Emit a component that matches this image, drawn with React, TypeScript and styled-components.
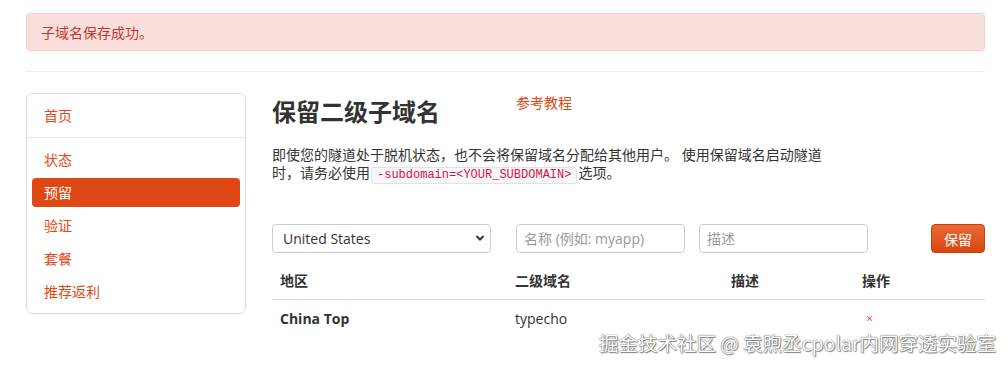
import styled, { createGlobalStyle } from "styled-components";

const GlobalStyle = createGlobalStyle`
  html, body {
    margin: 0;
    padding: 0;
    background: #ffffff;
  }
  body {
    font-family: "Open Sans", "Noto Sans CJK SC", sans-serif;
    font-size: 14px;
    color: #333333;
  }
  * { box-sizing: border-box; }
`;

const Page = styled.div`
  position: relative;
  width: 1008px;
  height: 367px;
  overflow: hidden;
  padding: 13px 23px 0 26px;
`;

const Alert = styled.div`
  height: 38px;
  display: flex;
  align-items: center;
  padding: 0 14px;
  background: #f9dedc;
  border: 1px solid #f3cfcc;
  border-radius: 4px;
  color: #c0392b;
  font-size: 14px;
`;

const Divider = styled.hr`
  margin: 20px 0 21px;
  border: 0;
  border-top: 1px solid #eeeeee;
`;

const Layout = styled.div`
  display: grid;
  grid-template-columns: 220px 1fr;
  column-gap: 26px;
  align-items: start;
`;

const Sidebar = styled.nav`
  border: 1px solid #dddddd;
  border-radius: 6px;
  padding: 7px 5px;
  display: flex;
  flex-direction: column;
  gap: 4px;
`;

const NavItem = styled.a<{ $active?: boolean }>`
  display: block;
  height: 29px;
  line-height: 29px;
  padding: 0 12px;
  border-radius: 4px;
  text-decoration: none;
  font-size: 14px;
  color: ${(p) => (p.$active ? "#ffffff" : "#dd4814")};
  background: ${(p) => (p.$active ? "#dd4814" : "transparent")};
`;

const NavDivider = styled.div`
  height: 1px;
  background: #e5e5e5;
  margin: 3px -5px 3px;
`;

const Main = styled.main`
  display: flex;
  flex-direction: column;
`;

const TitleRow = styled.div`
  display: grid;
  grid-template-columns: 244px 1fr;
  align-items: start;
`;

const Title = styled.h2`
  margin: 0;
  font-size: 24px;
  line-height: 38px;
  font-weight: 700;
  color: #333333;
`;

const Link = styled.a`
  font-size: 14px;
  line-height: 20px;
  color: #dd4814;
  text-decoration: none;
`;

const Intro = styled.p`
  margin: 15px 0 0;
  max-width: 560px;
  line-height: 18px;
  font-size: 14px;
  color: #333333;
`;

const Code = styled.code`
  font-family: "Liberation Mono", monospace;
  font-size: 12px;
  color: #dd1144;
  background: #f7f7f9;
  border: 1px solid #e1e1e8;
  border-radius: 3px;
  padding: 0 5px 1px;
  margin: 0 1px;
`;

const FormRow = styled.form`
  display: flex;
  align-items: center;
  margin-top: 40px;
`;

const SelectWrap = styled.div`
  position: relative;
  width: 219px;
  height: 29px;
  margin-right: 25px;
`;

const Select = styled.select`
  appearance: none;
  width: 100%;
  height: 100%;
  border: 1px solid #cccccc;
  border-radius: 4px;
  background: #ffffff;
  padding: 0 10px;
  font-family: "Open Sans", "Noto Sans CJK SC", sans-serif;
  font-size: 14px;
  color: #333333;
`;

const Chevron = styled.svg`
  position: absolute;
  right: 6px;
  top: 10px;
  pointer-events: none;
`;

const Input = styled.input<{ $gap?: number }>`
  width: 169px;
  height: 29px;
  margin-right: ${(p) => p.$gap ?? 0}px;
  border: 1px solid #cccccc;
  border-radius: 4px;
  padding: 0 7px;
  font-family: "Open Sans", "Noto Sans CJK SC", sans-serif;
  font-size: 14px;
  color: #333333;
  &::placeholder {
    color: #9a9a9a;
  }
`;

const SaveButton = styled.button`
  margin-left: auto;
  width: 54px;
  height: 29px;
  border: 1px solid #c8400f;
  border-radius: 4px;
  background: linear-gradient(#ea6a37, #d9460f);
  color: #ffffff;
  font-family: "Open Sans", "Noto Sans CJK SC", sans-serif;
  font-size: 14px;
  padding: 0;
`;

const Table = styled.table`
  margin-top: 10px;
  width: 100%;
  border-collapse: collapse;
  table-layout: fixed;
`;

const Th = styled.th<{ $w: number }>`
  width: ${(p) => p.$w}px;
  text-align: left;
  font-weight: 700;
  font-size: 14px;
  line-height: 20px;
  padding: 8px 8px;
  border-bottom: 1px solid #dddddd;
`;

const Td = styled.td<{ $bold?: boolean }>`
  font-size: 14px;
  line-height: 20px;
  padding: 8px 8px;
  font-weight: ${(p) => (p.$bold ? 700 : 400)};
`;

const Remove = styled.a`
  color: #dd4814;
  text-decoration: none;
  font-size: 12px;
  padding-left: 4px;
`;

const Watermark = styled.div`
  position: absolute;
  right: 12px;
  bottom: 12px;
  font-family: "Noto Sans CJK SC", sans-serif;
  font-size: 19.5px;
  line-height: 24px;
  color: #ffffff;
  text-shadow: 0 0 1px #666, 0 0 1px #666, 1px 1px 1px #888;
  white-space: nowrap;
`;

const navItems = ["状态", "预留", "验证", "套餐", "推荐返利"];

export default function App() {
  return (
    <Page>
      <GlobalStyle />
      <Alert>子域名保存成功。</Alert>
      <Divider />
      <Layout>
        <Sidebar>
          <NavItem href="#">首页</NavItem>
          <NavDivider />
          {navItems.map((item) => (
            <NavItem key={item} href="#" $active={item === "预留"}>
              {item}
            </NavItem>
          ))}
        </Sidebar>
        <Main>
          <TitleRow>
            <Title>保留二级子域名</Title>
            <Link href="#">参考教程</Link>
          </TitleRow>
          <Intro>
            即使您的隧道处于脱机状态，也不会将保留域名分配给其他用户。 使用保留域名启动隧道时，请务必使用
            <Code>-subdomain=&lt;YOUR_SUBDOMAIN&gt;</Code>选项。
          </Intro>
          <FormRow onSubmit={(e) => e.preventDefault()}>
            <SelectWrap>
              <Select defaultValue="us">
                <option value="us">United States</option>
                <option value="cn">China Top</option>
              </Select>
              <Chevron width="10" height="8" viewBox="0 0 10 8">
                <path d="M1.5 2 L5 5.5 L8.5 2" fill="none" stroke="#333" strokeWidth="2" />
              </Chevron>
            </SelectWrap>
            <Input placeholder="名称 (例如: myapp)" $gap={14} />
            <Input placeholder="描述" />
            <SaveButton type="submit">保留</SaveButton>
          </FormRow>
          <Table>
            <thead>
              <tr>
                <Th $w={235}>地区</Th>
                <Th $w={216}>二级域名</Th>
                <Th $w={131}>描述</Th>
                <Th $w={131}>操作</Th>
              </tr>
            </thead>
            <tbody>
              <tr>
                <Td $bold>China Top</Td>
                <Td>typecho</Td>
                <Td></Td>
                <Td>
                  <Remove href="#">×</Remove>
                </Td>
              </tr>
            </tbody>
          </Table>
        </Main>
      </Layout>
      <Watermark>掘金技术社区 @ 袁煦丞cpolar内网穿透实验室</Watermark>
    </Page>
  );
}
